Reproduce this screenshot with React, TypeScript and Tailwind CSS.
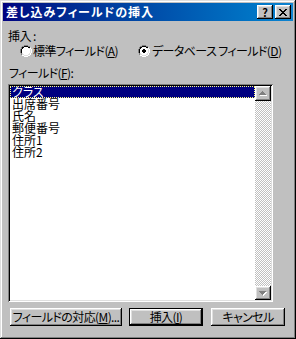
const RADIO = [
  "....DDDD....",
  "..DDKKKKDD..",
  ".DKKWWWWKKL.",
  ".DKWWWWWWLW.",
  "DKWWWWWWWWLW",
  "DKWWWWWWWWLW",
  "DKWWWWWWWWLW",
  "DKWWWWWWWWLW",
  ".DLWWWWWWLW.",
  ".DLLWWWWLLW.",
  "..WWLLLLWW..",
  "....WWWW....",
];
const COLORS: Record<string, string> = { D: "#808080", K: "#000000", W: "#ffffff", L: "#dfdfdf" };

function Radio({ checked }: { checked?: boolean }) {
  const rects: JSX.Element[] = [];
  RADIO.forEach((row, y) =>
    row.split("").forEach((c, x) => {
      if (COLORS[c]) rects.push(<rect key={`${x}-${y}`} x={x} y={y} width={1} height={1} fill={COLORS[c]} />);
    })
  );
  if (checked) {
    [
      [5, 4, 2, 1],
      [4, 5, 4, 2],
      [5, 7, 2, 1],
    ].forEach(([x, y, w, h], i) => rects.push(<rect key={`d${i}`} x={x} y={y} width={w} height={h} fill="#000" />));
  }
  return (
    <svg width="12" height="12" viewBox="0 0 12 12" shapeRendering="crispEdges" className="shrink-0">
      {rects}
    </svg>
  );
}

const bevel =
  "shadow-[inset_-1px_-1px_#000,inset_1px_1px_#fff,inset_-2px_-2px_#808080,inset_2px_2px_#dfdfdf]";

function Arrow({ up }: { up?: boolean }) {
  return (
    <svg width="8" height="5" viewBox="0 0 8 5" shapeRendering="crispEdges">
      {up ? (
        <>
          <path d="M4 1h1v1h1v1h1v1h1v1h-7v-1z" fill="#fff" />
          <path d="M3 0h1v1h1v1h1v1h1v1h-7v-1h1v-1h1v-1h1z" fill="#808080" />
        </>
      ) : (
        <>
          <path d="M1 1h7v1h-1v1h-1v1h-1v1h-1v-1z" fill="#fff" />
          <path d="M0 0h7v1h-1v1h-1v1h-1v1h-1v-1h-1v-1h-1v-1h-1z" fill="#808080" />
        </>
      )}
    </svg>
  );
}

const items = ["クラス", "出席番号", "氏名", "郵便番号", "住所1", "住所2"];

export default function App() {
  return (
    <div className="w-[296px] h-[339px] bg-[#c0c0c0] p-[3px] flex flex-col text-[12px] leading-[12px] tracking-[-0.6px] whitespace-nowrap text-black font-['Noto_Sans_CJK_JP',sans-serif] [font-feature-settings:'palt'] shadow-[inset_-1px_-1px_#000,inset_1px_1px_#dfdfdf,inset_-2px_-2px_#808080,inset_2px_2px_#fff]">
      <div className="h-[18px] flex items-center bg-gradient-to-r from-[#000080] to-[#1084d0] pl-[3px] pr-[2px]">
        <span className="text-white font-bold flex-1 tracking-[1px]">差し込みフィールドの挿入</span>
        <div className="flex gap-[2px]">
          <div className={`w-[16px] h-[14px] bg-[#c0c0c0] flex items-center justify-center font-bold text-[11px] tracking-normal ${bevel}`}>?</div>
          <div className={`w-[16px] h-[14px] bg-[#c0c0c0] flex items-center justify-center ${bevel}`}>
            <svg width="8" height="7" viewBox="0 0 8 7" shapeRendering="crispEdges">
              <path d="M0 0h2v1h-2zM6 0h2v1h-2zM1 1h2v1h-2zM5 1h2v1h-2zM2 2h4v1h-4zM3 3h2v1h-2zM2 4h4v1h-4zM1 5h2v1h-2zM5 5h2v1h-2zM0 6h2v1h-2zM6 6h2v1h-2z" fill="#000" />
            </svg>
          </div>
        </div>
      </div>

      <div className="px-[5px] pt-[9px] flex flex-col">
        <div>挿入 :</div>
        <div className="flex mt-[3px] pl-[12px]">
          <div className="w-[118px] shrink-0 flex items-center gap-[1px]">
            <Radio />
            <span>
              標準フィールド(<u>A</u>)
            </span>
          </div>
          <div className="flex items-center gap-[2px]">
            <Radio checked />
            <span>
              データベース フィールド(<u>D</u>)
            </span>
          </div>
        </div>

        <div className="mt-[10px] ml-[1px]">
          フィールド(<u>F</u>):
        </div>

        <div className="mt-[5px] w-[265px] h-[218px] bg-white p-[2px] flex shadow-[inset_1px_1px_#808080,inset_-1px_-1px_#fff,inset_2px_2px_#000,inset_-2px_-2px_#dfdfdf]">
          <div className="flex-1 flex flex-col tracking-normal">
            {items.map((it, i) => (
              <div
                key={it}
                className={`h-[12px] pl-[2px] ${
                  i === 0 ? "bg-[#000080] text-white outline outline-1 outline-dotted outline-[#ffff80] -outline-offset-1" : ""
                }`}
              >
                {it}
              </div>
            ))}
          </div>
          <div className="w-[16px] flex flex-col">
            <div className={`h-[15px] bg-[#c0c0c0] flex items-center justify-center ${bevel}`}>
              <Arrow up />
            </div>
            <div className="flex-1 bg-[repeating-conic-gradient(#c0c0c0_0_25%,#fff_0_50%)] bg-[length:2px_2px]" />
            <div className={`h-[14px] bg-[#c0c0c0] flex items-center justify-center ${bevel}`}>
              <Arrow />
            </div>
          </div>
        </div>

        <div className="flex mt-[6px] ml-[2px]">
          <button className={`w-[112px] h-[18px] bg-[#c0c0c0] ${bevel}`}>
            フィールドの対応(<u>M</u>)...
          </button>
          <div className="ml-[7px] w-[74px] h-[18px] border border-black">
            <button className={`w-full h-full bg-[#c0c0c0] ${bevel}`}>
              挿入(<u>I</u>)
            </button>
          </div>
          <button className={`ml-[8px] w-[74px] h-[18px] bg-[#c0c0c0] ${bevel}`}>キャンセル</button>
        </div>
      </div>
    </div>
  );
}
